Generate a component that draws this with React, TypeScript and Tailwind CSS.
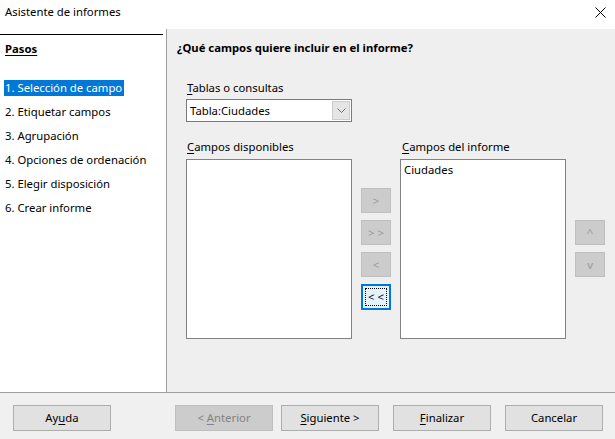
import React from 'react';

const FONT = "font-['Noto_Sans',_'Liberation_Sans',_sans-serif]";

const STEPS = [
  '1. Selección de campo',
  '2. Etiquetar campos',
  '3. Agrupación',
  '4. Opciones de ordenación',
  '5. Elegir disposición',
  '6. Crear informe',
];

function U({ children }: { children: React.ReactNode }) {
  return <span className="underline underline-offset-2">{children}</span>;
}

function SmallButton({ label, focused }: { label: string; focused?: boolean }) {
  if (focused) {
    return (
      <div className="w-[30px] h-[26px] border-2 border-[#0078d7] bg-[#e5f1fb] p-[2px]">
        <div className="w-full h-full border border-dotted border-black flex items-center justify-center text-black leading-none">
          {label}
        </div>
      </div>
    );
  }
  return (
    <div className="w-[30px] h-[25px] border border-[#bfbfbf] bg-[#cccccc] flex items-center justify-center text-[#9a9a9a] leading-none">
      {label}
    </div>
  );
}

function FooterButton({ children, disabled }: { children: React.ReactNode; disabled?: boolean }) {
  return (
    <div
      className={
        disabled
          ? 'w-[98px] h-[26px] border border-[#bfbfbf] bg-[#cccccc] text-[#838383] flex items-center justify-center'
          : 'w-[98px] h-[26px] border border-[#adadad] bg-[#e1e1e1] text-black flex items-center justify-center'
      }
    >
      <span>{children}</span>
    </div>
  );
}

export default function App() {
  return (
    <div className={`${FONT} w-[615px] h-[439px] flex flex-col text-[11.3px] leading-[16px] text-black bg-[#f0f0f0] overflow-hidden`}>
      {/* Title bar */}
      <div className="h-[29px] bg-white flex items-center justify-between pl-[5px] pr-[9px] pb-[5px]">
        <span>Asistente de informes</span>
        <svg width="11" height="11" viewBox="0 0 11 11">
          <path d="M0.5 0.5 L10.5 10.5 M10.5 0.5 L0.5 10.5" stroke="#000" strokeWidth="1" />
        </svg>
      </div>

      {/* Body */}
      <div className="flex-1 flex min-h-0">
        {/* Steps */}
        <div className="w-[167px] bg-white border-r border-[#a0a0a0] pt-[5px]">
          <div className="border-t border-black mr-[3px]" />
          <div className="pl-[5px] pt-[6px] font-bold underline underline-offset-2">Pasos</div>
          <div className="mt-[23px] flex flex-col gap-[8px]">
            {STEPS.map((s, i) => (
              <div key={s} className="pl-[4px]">
                <span className={i === 0 ? 'inline-block bg-[#0078d7] text-white pl-[1px] pr-[2px]' : 'inline-block pl-[1px]'}>
                  {s}
                </span>
              </div>
            ))}
          </div>
        </div>

        {/* Page */}
        <div className="flex-1 bg-[#efefef] pt-[11px]">
          <div className="pl-[10px] font-bold">¿Qué campos quiere incluir en el informe?</div>

          <div className="pl-[19px] mt-[24px]">
            <div className="pl-[1px]"><U>T</U>ablas o consultas</div>
            <div className="mt-[3px] w-[166px] h-[23px] bg-white border border-[#7a7a7a] flex items-center justify-between pl-[3px] pr-[1px]">
              <span>Tabla:Ciudades</span>
              <div className="w-[18px] h-[19px] bg-[#e5e5e5] border border-[#cccccc] flex items-center justify-center">
                <svg width="9" height="6" viewBox="0 0 9 6">
                  <path d="M0.5 0.5 L4.5 4.5 L8.5 0.5" fill="none" stroke="#6d6d6d" strokeWidth="1" />
                </svg>
              </div>
            </div>

            <div className="mt-[17px] flex">
              <div className="w-[214px] pl-[1px]"><U>C</U>ampos disponibles</div>
              <div className="pl-[2px]"><U>C</U>ampos del informe</div>
            </div>

            <div className="mt-[4px] flex items-start">
              <div className="w-[166px] h-[180px] bg-white border border-[#828282]" />
              <div className="ml-[9px] mt-[29px] flex flex-col gap-[7px]">
                <SmallButton label=">" />
                <SmallButton label="> >" />
                <SmallButton label="<" />
                <SmallButton label="< <" focused />
              </div>
              <div className="ml-[9px] w-[166px] h-[180px] bg-white border border-[#828282] px-[3px] pt-[2px]">
                Ciudades
              </div>
              <div className="ml-[9px] mt-[61px] flex flex-col gap-[7px]">
                <SmallButton label="^" />
                <SmallButton label="v" />
              </div>
            </div>
          </div>
        </div>
      </div>

      {/* Footer */}
      <div className="h-[47px] border-t border-[#a0a0a0] bg-[#f0f0f0] pt-[12px] pl-[13px] flex items-start">
        <FooterButton>Ay<U>u</U>da</FooterButton>
        <div className="ml-[64px] flex gap-[8px]">
          <FooterButton disabled>&lt; <U>A</U>nterior</FooterButton>
          <FooterButton><U>S</U>iguiente &gt;</FooterButton>
        </div>
        <div className="ml-[14px] flex gap-[14px]">
          <FooterButton><U>F</U>inalizar</FooterButton>
          <FooterButton>Cancelar</FooterButton>
        </div>
      </div>
    </div>
  );
}
